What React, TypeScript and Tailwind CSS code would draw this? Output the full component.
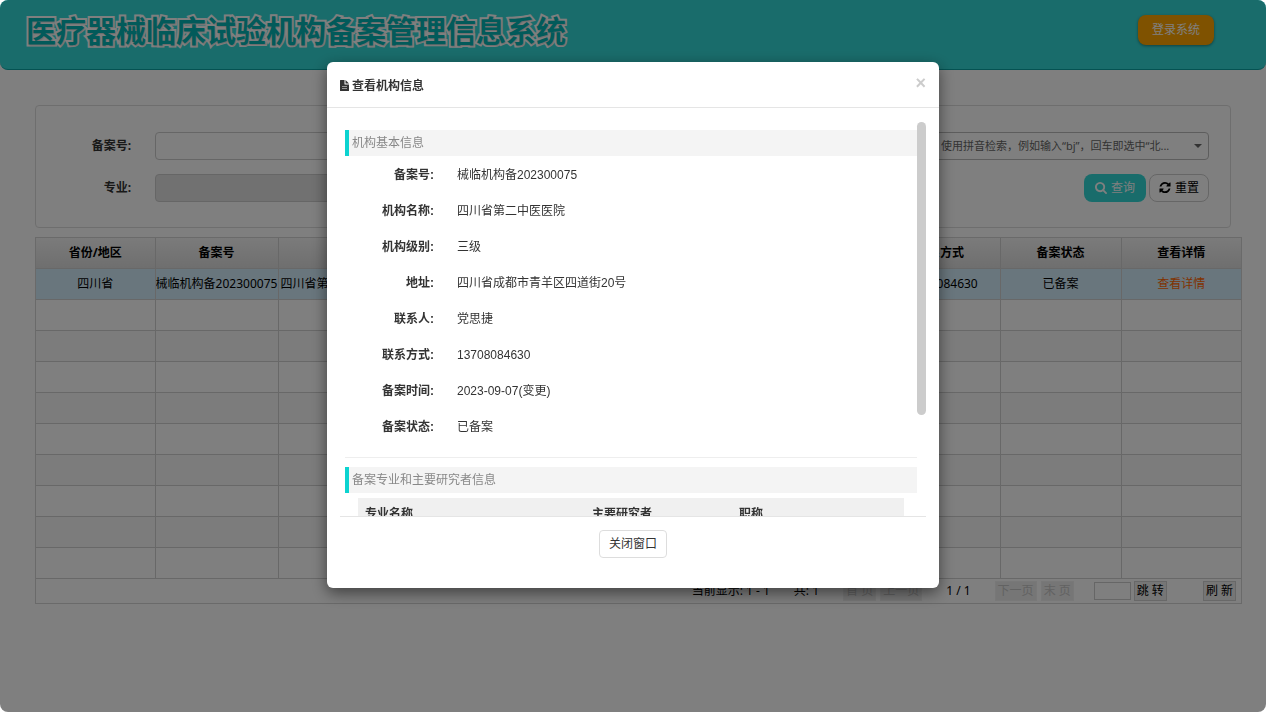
import React, { useState } from 'react';

const columns = [
  { title: '省份/地区', width: 'w-[119px]' },
  { title: '备案号', width: 'w-[123px]' },
  { title: '机构名称', width: 'w-[180px]' },
  { title: '地址', width: '' },
  { title: '联系人', width: 'w-[100px]' },
  { title: '联系方式', width: 'w-[120px]' },
  { title: '备案状态', width: 'w-[121px]' },
  { title: '查看详情', width: 'w-[120px]' },
];

const record = ['四川省', '械临机构备202300075', '四川省第二中医医院', '', '', '13708084630', '已备案'];

const details = [
  ['备案号:', '械临机构备202300075'],
  ['机构名称:', '四川省第二中医医院'],
  ['机构级别:', '三级'],
  ['地址:', '四川省成都市青羊区四道街20号'],
  ['联系人:', '党思捷'],
  ['联系方式:', '13708084630'],
  ['备案时间:', '2023-09-07(变更)'],
  ['备案状态:', '已备案'],
];

const emptyRows = [1, 2, 3, 4, 5, 6, 7, 8, 9];

function SearchIcon() {
  return (
    <svg className="size-3" viewBox="0 0 1664 1664" fill="currentColor" aria-hidden="true">
      <path d="M1152 704q0-185-131.5-316.5t-316.5-131.5-316.5 131.5-131.5 316.5 131.5 316.5 316.5 131.5 316.5-131.5 131.5-316.5zm512 832q0 52-38 90t-90 38q-54 0-90-38l-343-342q-179 124-399 124-143 0-273.5-55.5t-225-150-150-225-55.5-273.5 55.5-273.5 150-225 225-150 273.5-55.5 273.5 55.5 225 150 150 225 55.5 273.5q0 220-124 399l343 343q37 37 37 90z" />
    </svg>
  );
}

function RefreshIcon() {
  return (
    <svg className="size-3" viewBox="0 0 1536 1664" fill="currentColor" aria-hidden="true">
      <path d="M1511 928q0 5-1 7-64 268-268 434.5t-478 166.5q-146 0-282.5-55t-243.5-157l-129 129q-19 19-45 19t-45-19-19-45v-448q0-26 19-45t45-19h448q26 0 45 19t19 45-19 45l-137 137q71 66 161 102t187 36q134 0 250-65t186-179q11-17 53-117 8-23 30-23h192q13 0 22.5 9.5t9.5 22.5zm25-800v448q0 26-19 45t-45 19h-448q-26 0-45-19t-19-45 19-45l138-138q-148-137-349-137-134 0-250 65t-186 179q-11 17-53 117-8 23-30 23h-199q-13 0-22.5-9.5t-9.5-22.5v-7q65-268 270-434.5t480-166.5q146 0 284 55.5t245 156.5l130-129q19-19 45-19t45 19 19 45z" />
    </svg>
  );
}

function FileIcon() {
  return (
    <svg className="h-[11px] w-[9px]" viewBox="0 0 18 22" fill="currentColor" aria-hidden="true">
      <path fillRule="evenodd" d="M1 0h8v8q0 1 1 1h8v12q0 1-1 1H1q-1 0-1-1V1q0-1 1-1zM4 12v1h10v-1zM4 16v1h10v-1z" />
      <path d="M11 0l7 7h-7z" />
    </svg>
  );
}

function SectionTitle({ children }: { children: React.ReactNode }) {
  return (
    <h4 className="h-[26px] border-l-4 border-[#0cd3d0] bg-[#f4f4f4] pl-[3px] leading-[26px] text-[#888]">{children}</h4>
  );
}

function PagerButton({ children, disabled }: { children: React.ReactNode; disabled?: boolean }) {
  return (
    <button
      type="button"
      disabled={disabled}
      className="h-5 border border-[#d0d0d0] bg-[#ececec] px-[2px] leading-4 text-black disabled:border-[#f0f0f0] disabled:text-[#c4c4c4]"
    >
      {children}
    </button>
  );
}

function DetailModal({ onClose }: { onClose: () => void }) {
  return (
    <div className="fixed inset-0 rounded-lg bg-black/50">
      <div
        role="dialog"
        aria-labelledby="modal-title"
        className="mx-auto mt-[62px] w-[612px] max-w-full rounded-md bg-white font-['Liberation_Sans','Noto_Sans_CJK_SC',sans-serif] text-[#333] shadow-[0_5px_15px_rgba(0,0,0,0.5)]"
      >
        <div className="flex h-[46px] items-center justify-between border-b border-[#e5e5e5] px-[13px]">
          <h3 id="modal-title" className="flex items-center gap-[3px] pt-[2px] font-bold">
            <FileIcon />
            查看机构信息
          </h3>
          <button type="button" aria-label="关闭" onClick={onClose} className="pb-1 text-lg font-bold leading-4 text-[#ccc]">
            ×
          </button>
        </div>

        <div className="mx-[13px] flex max-h-[409px] overflow-hidden border-b border-[#e5e5e5] pt-[14px]">
          <div className="ml-[5px] flex-1 pt-2">
            <SectionTitle>机构基本信息</SectionTitle>
            <dl className="pt-px pb-3">
              {details.map(([label, value]) => (
                <div key={label} className="flex h-9 items-center">
                  <dt className="w-[89px] text-right font-bold">{label}</dt>
                  <dd className="pl-[23px]">{value}</dd>
                </div>
              ))}
            </dl>
            <hr className="mb-[9px] border-[#eee]" />
            <SectionTitle>备案专业和主要研究者信息</SectionTitle>
            <div className="px-[13px] pt-[5px]">
              <table className="w-full table-fixed text-left">
                <thead className="bg-[#f0f0f0]">
                  <tr className="h-[31px]">
                    <th className="w-[227px] pl-[7px]">专业名称</th>
                    <th className="w-[147px] pl-[7px]">主要研究者</th>
                    <th className="pl-[7px]">职称</th>
                  </tr>
                </thead>
              </table>
            </div>
          </div>
          <div className="h-[293px] w-[9px] rounded-full bg-[#ccc]"></div>
        </div>

        <div className="flex justify-center pt-[13px] pb-[30px]">
          <button type="button" onClick={onClose} className="h-7 rounded border border-[#ddd] bg-white px-[9px]">
            关闭窗口
          </button>
        </div>
      </div>
    </div>
  );
}

function App() {
  const [isOpen, setIsOpen] = useState(true);

  return (
    <div className="min-h-screen bg-white font-['Noto_Sans','Noto_Sans_CJK_SC',sans-serif] text-xs text-black">
      <header className="flex h-[70px] items-start justify-between rounded-lg border-b border-[#0aa5a5] bg-[#33d8d6] pr-[52px] pl-[26px]">
        <h1 className="pt-[9px] text-[30px] leading-[44px] font-bold text-[#05b5b5] [-webkit-text-stroke:4px_#fff] [paint-order:stroke_fill] [text-shadow:1px_1px_1px_rgba(0,0,0,0.15)]">
          医疗器械临床试验机构备案管理信息系统
        </h1>
        <a href="#login" className="mt-[15px] rounded-lg bg-[#ffa500] px-[14px] leading-[30px] text-white shadow-[0_1px_3px_rgba(0,0,0,0.4)]">
          登录系统
        </a>
      </header>

      <main className="pt-[35px] pr-6 pl-[35px]">
        <form className="mr-[11px] h-[123px] rounded border border-[#ddd] pt-[26px] pr-[21px] pl-5">
          <div className="flex h-7 items-center">
            <label htmlFor="record-no" className="w-[75px] text-right font-bold text-[#333]">备案号:</label>
            <input id="record-no" className="ml-6 h-7 w-[250px] rounded border border-[#ccc] bg-white px-3" />
            <div className="relative ml-auto w-[281px]">
              <select aria-label="省份/地区" className="h-7 w-full appearance-none truncate rounded border border-[#bbb] bg-white pr-5 pl-3 text-[11px] text-[#666]">
                <option>使用拼音检索，例如输入“bj”，回车即选中“北...</option>
              </select>
              <svg className="absolute top-3 right-[7px] h-1 w-2" viewBox="0 0 8 4" fill="#666" aria-hidden="true">
                <path d="M0 0h8L4 4z" />
              </svg>
            </div>
          </div>
          <div className="mt-[14px] flex h-7 items-center">
            <label htmlFor="major" className="w-[75px] text-right font-bold text-[#333]">专业:</label>
            <input id="major" disabled className="ml-6 h-7 w-[250px] rounded border border-[#ccc] bg-[#e2e2e2] px-3" />
            <button type="button" className="ml-auto flex h-7 items-center gap-1 rounded-lg bg-[#33d8d6] px-[11px] text-white">
              <SearchIcon />
              查询
            </button>
            <button type="reset" className="ml-[3px] flex h-7 items-center gap-1 rounded-lg border border-[#ccc] bg-white px-[9px]">
              <RefreshIcon />
              重置
            </button>
          </div>
        </form>

        <div className="mt-[9px] border border-[#d5d5d5]">
          <table className="w-full table-fixed border-collapse text-center">
            <thead>
              <tr className="h-[30px] bg-linear-to-b from-[#f6f6f6] to-[#dedede]">
                {columns.map((column) => (
                  <th key={column.title} className={`${column.width} border-r border-b border-[#d0d0d0] last:border-r-0`}>
                    {column.title}
                  </th>
                ))}
              </tr>
            </thead>
            <tbody>
              <tr className="h-[31px] bg-[#d3edfb]">
                {record.map((value, index) => (
                  <td key={index} className={`truncate border-r border-b border-[#d0d0d0] ${index === 2 ? 'pl-[2px] text-left' : ''}`}>
                    {value}
                  </td>
                ))}
                <td className="border-b border-[#d0d0d0]">
                  <button type="button" onClick={() => setIsOpen(true)} className="text-[#ff6600]">查看详情</button>
                </td>
              </tr>
              {emptyRows.map((row) => (
                <tr key={row} className="h-[31px] even:bg-white odd:bg-[#f8f8f8]">
                  {columns.map((column) => (
                    <td key={column.title} className="border-r border-b border-[#d0d0d0] last:border-r-0"></td>
                  ))}
                </tr>
              ))}
            </tbody>
          </table>
          <div className="flex h-6 items-center justify-end pr-[5px]">
            <span className="mr-6">当前显示: 1 - 1</span>
            <span className="mr-6">共: 1</span>
            <PagerButton disabled>首 页</PagerButton>
            <span className="w-1"></span>
            <PagerButton disabled>上一页</PagerButton>
            <span className="mx-6">1 / 1</span>
            <PagerButton disabled>下一页</PagerButton>
            <span className="w-1"></span>
            <PagerButton disabled>末 页</PagerButton>
            <input aria-label="页码" className="mr-[3px] ml-5 h-[18px] w-[37px] border border-[#ccc] bg-white px-1" />
            <PagerButton>跳 转</PagerButton>
            <span className="w-9"></span>
            <PagerButton>刷 新</PagerButton>
          </div>
        </div>
      </main>

      {isOpen && <DetailModal onClose={() => setIsOpen(false)} />}
    </div>
  );
}

export default App;
